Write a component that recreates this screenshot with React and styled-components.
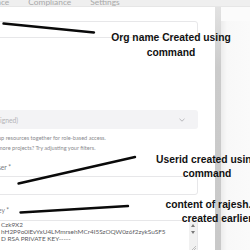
import React from "react";
import styled, { createGlobalStyle } from "styled-components";

const Global = createGlobalStyle`
  html, body { margin: 0; padding: 0; background: #fafafa; }
  body { width: 250px; height: 250px; overflow: hidden; font-family: Lato, "Liberation Sans", sans-serif; }
`;

const Page = styled.div`
  position: relative;
  width: 250px;
  height: 250px;
  overflow: hidden;
  display: flex;
  flex-direction: column;
`;

const TabStrip = styled.div`
  height: 6px;
  flex: none;
  background: #efefef;
  border-bottom: 1px solid #e6e6e6;
  overflow: hidden;
  display: flex;
  align-items: flex-end;
`;

const TabList = styled.div`
  display: flex;
  gap: 19px;
  margin-left: -35px;
`;

const Tab = styled.span`
  font-size: 8.4px;
  line-height: 8px;
  height: 8px;
  color: #a9a9a9;
  white-space: nowrap;
`;

const Body = styled.div`
  flex: 1;
  display: flex;
  min-height: 0;
`;

const Panel = styled.div`
  width: 215px;
  flex: none;
  background: #ffffff;
  overflow: hidden;
  padding: 13px 17px 0 0;
  box-sizing: border-box;
`;

const Form = styled.div`
  display: flex;
  flex-direction: column;
  margin-left: -3px;
`;

const Input = styled.div`
  height: ${(p) => p.$h}px;
  box-sizing: border-box;
  border: 1px solid #e7e7e9;
  border-radius: 3px;
  background: #fff;
  margin-top: ${(p) => p.$mt || 0}px;
`;

const Select = styled.div`
  margin-top: 72px;
  height: 19px;
  border-radius: 3px;
  background: #f3f3f5;
  display: flex;
  align-items: center;
  justify-content: space-between;
  padding: 0 13px 0 3px;
  font-size: 6.8px;
  color: #b4b4b8;
`;

const Help = styled.div`
  margin-top: 4px;
  font-size: 5.6px;
  line-height: 9.5px;
  color: #8a8a8e;
  padding-left: 1px;
  white-space: nowrap;
`;

const Label = styled.div`
  margin-top: ${(p) => p.$mt}px;
  font-size: 6.6px;
  line-height: 9px;
  color: #7a7a7e;
  padding-left: 1px;
`;

const TextArea = styled.div`
  margin-top: 5px;
  height: 32px;
  box-sizing: border-box;
  border: 1px solid #e7e7e9;
  border-radius: 3px;
  display: flex;
  overflow: hidden;
`;

const KeyText = styled.div`
  flex: 1;
  padding: 1px 0 0 3px;
  font-size: 6.4px;
  line-height: 6.8px;
  color: #5a5a5e;
  white-space: nowrap;
  overflow: hidden;
`;

const Scroll = styled.div`
  width: 8px;
  flex: none;
  background: #f1f1f1;
  display: flex;
  flex-direction: column;
  align-items: center;
  padding-top: 3px;
  gap: 4px;
`;

const ScrollEdge = styled.div`
  width: 6px;
  flex: none;
  background: linear-gradient(#e2e2e2, #cbcbcb 25%, #c9c9c9);
`;

const Backdrop = styled.div`
  flex: 1;
  background: linear-gradient(90deg, #ececec, #f8f8f8 6px, #fafafa);
  border-top: 14px solid #fbfbfb;
`;

const Overlay = styled.svg`
  position: absolute;
  left: 0;
  top: 0;
  pointer-events: none;
`;

const Note = styled.div`
  position: absolute;
  left: ${(p) => p.$cx - 75}px;
  top: ${(p) => p.$top}px;
  width: 150px;
  text-align: center;
  font-family: "Liberation Sans", Arial, sans-serif;
  font-weight: 700;
  font-size: 10.3px;
  line-height: ${(p) => p.$lh}px;
  color: #111;
  white-space: nowrap;
`;

const Chevron = () => (
  <svg width="6" height="4" viewBox="0 0 6 4">
    <polyline points="0.5,0.8 3,3.2 5.5,0.8" fill="none" stroke="#b0b0b4" strokeWidth="0.9" />
  </svg>
);

const Arrow = ({ up }) => (
  <svg width="4" height="3" viewBox="0 0 4 3">
    <polygon points={up ? "0,3 4,3 2,0" : "0,0 4,0 2,3"} fill="#7a7a7a" />
  </svg>
);

const Grip = styled.svg`
  margin-top: auto;
  margin-bottom: 1px;
`;

export default function App() {
  return (
    <Page>
      <Global />
      <TabStrip>
        <TabList>
          <Tab>Governance</Tab>
          <Tab>Compliance</Tab>
          <Tab>Settings</Tab>
        </TabList>
      </TabStrip>
      <Body>
        <Panel>
          <Form>
            <Input $h={17} $mt={1} />
            <Select>
              <span>igned)</span>
              <Chevron />
            </Select>
            <Help>
              up resources together for role-based access.
              <br />
              more projects? Try adjusting your filters.
            </Help>
            <Label $mt={11}>ser *</Label>
            <Input $h={19} $mt={4} />
            <Label $mt={11}>ey *</Label>
            <TextArea>
              <KeyText>
                Czk9X2
                <br />
                hH2P9o0iEvYxU4LMmrsehMCr4I5SzOQW0z6f2zykSuSF5
                <br />
                D RSA PRIVATE KEY-----
              </KeyText>
              <Scroll>
                <Arrow up />
                <Arrow />
                <Grip width="5" height="5" viewBox="0 0 5 5">
                  <line x1="1" y1="5" x2="5" y2="1" stroke="#9a9a9a" strokeWidth="0.6" />
                  <line x1="3" y1="5" x2="5" y2="3" stroke="#9a9a9a" strokeWidth="0.6" />
                </Grip>
              </Scroll>
            </TextArea>
          </Form>
        </Panel>
        <ScrollEdge />
        <Backdrop />
      </Body>
      <Overlay width="250" height="250" viewBox="0 0 250 250">
        <g stroke="#0a0a0a" strokeWidth="2.4" strokeLinecap="round">
          <line x1="3.5" y1="23.5" x2="94" y2="32.5" />
          <line x1="18.5" y1="183.5" x2="135" y2="157" />
          <line x1="20.5" y1="212.5" x2="128" y2="206" />
        </g>
      </Overlay>
      <Note $cx={171} $top={29.5} $lh={15}>
        Org name Created using
        <br />
        command
      </Note>
      <Note $cx={207} $top={152.5} $lh={14}>
        Userid created using
        <br />
        command
      </Note>
      <Note $cx={217} $top={197.5} $lh={14}>
        content of rajesh.key
        <br />
        created earlier
      </Note>
    </Page>
  );
}
